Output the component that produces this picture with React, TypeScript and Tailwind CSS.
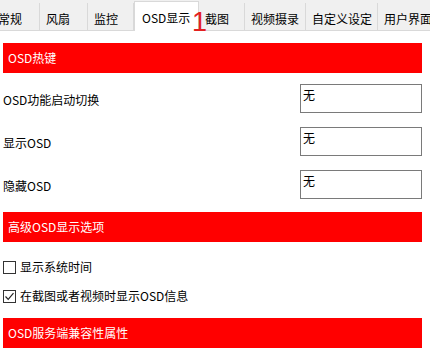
const font = "font-['Noto_Sans_CJK_SC','Noto_Sans',sans-serif]";

const tabs = [
  { label: "常规", w: "w-[48px]" },
  { label: "风扇", w: "w-[48px]" },
  { label: "监控", w: "w-[46px]" },
  { label: "OSD显示", w: "w-[65px]", active: true },
  { label: "截图", w: "w-[46px]" },
  { label: "视频摄录", w: "w-[61px]" },
  { label: "自定义设定", w: "w-[72px]" },
  { label: "用户界面", w: "w-[70px]" },
];

function SectionHeader({ title }: { title: string }) {
  return (
    <div className="flex h-[30px] items-center bg-[#ff0000] pl-[5px] text-[12px] text-white">
      {title}
    </div>
  );
}

function HotkeyRow({ label }: { label: string }) {
  return (
    <div className="flex h-[29px] items-center justify-between">
      <span className="pt-[3px] text-[12px] text-black">{label}</span>
      <div className="h-[29px] w-[122px] border border-[#7a7a7a] bg-white pl-[2px] pt-[2px] text-[12px] leading-[16px] text-black">
        无
      </div>
    </div>
  );
}

function Check({ label, checked }: { label: string; checked?: boolean }) {
  return (
    <label className="flex h-[20px] items-center gap-[4px] text-[12px] text-black">
      <span className="flex h-[13px] w-[13px] items-center justify-center border border-[#333333] bg-white">
        {checked && (
          <svg width="11" height="11" viewBox="0 0 11 11">
            <path d="M1.5 5.5 L4.2 8.3 L9.5 2.2" fill="none" stroke="#222" strokeWidth="1.2" />
          </svg>
        )}
      </span>
      <span>{label}</span>
    </label>
  );
}

export default function App() {
  return (
    <div className={`h-[359px] w-[430px] overflow-hidden bg-white ${font}`}>
      <div className="flex h-[31px] items-end border-b border-[#d9d9d9] bg-[#f0f0f0]">
        <div className="ml-[-8px] flex shrink-0 items-end">
          {tabs.map((t) =>
            t.active ? (
              <div
                key={t.label}
                className={`relative z-10 mb-[-1px] flex h-[30px] shrink-0 items-center border-x border-t border-[#d9d9d9] bg-white pl-[7px] pt-[2px] text-[12px] text-black ${t.w}`}
              >
                {t.label}
                <span className="absolute left-[57px] top-[7px] font-['Liberation_Sans',Arial,sans-serif] text-[27px] leading-none text-[#e3201f]">
                  1
                </span>
              </div>
            ) : (
              <div
                key={t.label}
                className={`flex h-[27px] shrink-0 items-center border-r border-[#d9d9d9] pl-[6px] pt-[4px] text-[12px] text-black ${t.w}`}
              >
                {t.label}
              </div>
            )
          )}
        </div>
      </div>

      <div className="pl-[3px] pr-[8px] pt-[12px]">
        <SectionHeader title="OSD热键" />
        <div className="mt-[11px] flex flex-col gap-[14px]">
          <HotkeyRow label="OSD功能启动切换" />
          <HotkeyRow label="显示OSD" />
          <HotkeyRow label="隐藏OSD" />
        </div>

        <div className="mt-[13px]">
          <SectionHeader title="高级OSD显示选项" />
        </div>
        <div className="mt-[15px] flex flex-col gap-[9px]">
          <Check label="显示系统时间" />
          <Check label="在截图或者视频时显示OSD信息" checked />
        </div>

        <div className="mt-[12px]">
          <SectionHeader title="OSD服务端兼容性属性" />
        </div>
      </div>
    </div>
  );
}
